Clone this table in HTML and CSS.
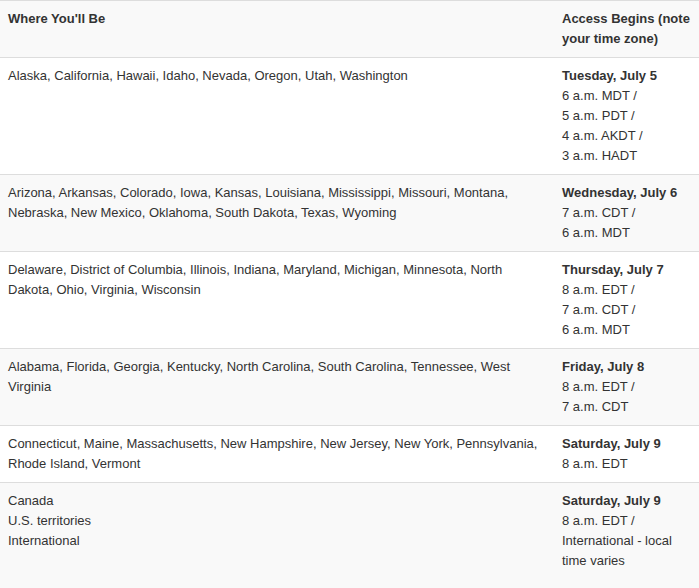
FILE: index.html
```html
<!DOCTYPE html>
<html>
<head>
<meta charset="utf-8">
<link rel="stylesheet" href="styles.css">
</head>
<body>
<table class="schedule">
  <colgroup><col class="col-where"><col class="col-when"></colgroup>
  <thead>
    <tr><th>Where You'll Be</th><th>Access Begins (note your time zone)</th></tr>
  </thead>
  <tbody>
    <tr>
      <td>Alaska, California, Hawaii, Idaho, Nevada, Oregon, Utah, Washington</td>
      <td><strong>Tuesday, July 5</strong><br>6 a.m. MDT /<br>5 a.m. PDT /<br>4 a.m. AKDT /<br>3 a.m. HADT</td>
    </tr>
    <tr>
      <td>Arizona, Arkansas, Colorado, Iowa, Kansas, Louisiana, Mississippi, Missouri, Montana, Nebraska, New Mexico, Oklahoma, South Dakota, Texas, Wyoming</td>
      <td><strong>Wednesday, July 6</strong><br>7 a.m. CDT /<br>6 a.m. MDT</td>
    </tr>
    <tr>
      <td>Delaware, District of Columbia, Illinois, Indiana, Maryland, Michigan, Minnesota, North Dakota, Ohio, Virginia, Wisconsin</td>
      <td><strong>Thursday, July 7</strong><br>8 a.m. EDT /<br>7 a.m. CDT /<br>6 a.m. MDT</td>
    </tr>
    <tr>
      <td>Alabama, Florida, Georgia, Kentucky, North Carolina, South Carolina, Tennessee, West Virginia</td>
      <td><strong>Friday, July 8</strong><br>8 a.m. EDT /<br>7 a.m. CDT</td>
    </tr>
    <tr>
      <td>Connecticut, Maine, Massachusetts, New Hampshire, New Jersey, New York, Pennsylvania, Rhode Island, Vermont</td>
      <td><strong>Saturday, July 9</strong><br>8 a.m. EDT</td>
    </tr>
    <tr class="last">
      <td>Canada<br>U.S. territories<br>International</td>
      <td><strong>Saturday, July 9</strong><br>8 a.m. EDT /<br>International - local time varies</td>
    </tr>
  </tbody>
</table>
</body>
</html>
```

FILE: styles.css
```css
html, body {
  margin: 0;
  padding: 0;
  background: #fff;
}
.schedule {
  width: 699px;
  border-collapse: collapse;
  border-spacing: 0;
  font-family: "Liberation Sans", Arial, sans-serif;
  font-size: 13px;
  line-height: 20px;
  color: #333;
}
.col-where { width: 554px; }
.col-when { width: 145px; }
.schedule th,
.schedule td {
  padding: 8px;
  text-align: left;
  vertical-align: top;
  border-top: 1px solid #ddd;
}
.schedule th {
  font-weight: bold;
  background: #f9f9f9;
  border-bottom: 1px solid #ddd;
}
.schedule thead tr:first-child th { border-top: 1px solid #ddd; }
.schedule tbody tr:nth-child(even) td { background: #f9f9f9; }
.schedule tbody tr:first-child td { border-top: 0; }
.schedule strong { font-weight: bold; }
.schedule .last td { padding-bottom: 17px; }
```
